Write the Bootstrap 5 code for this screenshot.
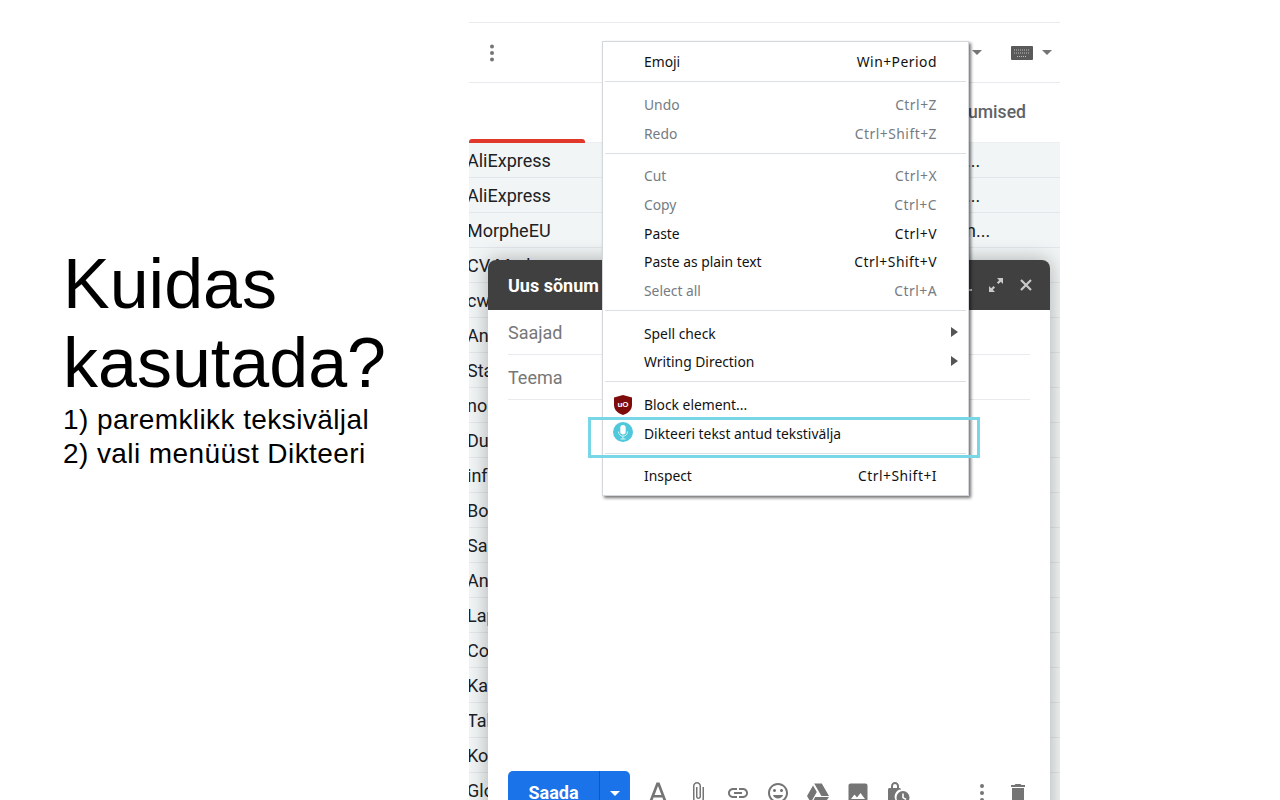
<!DOCTYPE html>
<html lang="et">
<head>
<meta charset="utf-8">
<title>Kuidas kasutada?</title>
<link href="https://cdn.jsdelivr.net/npm/bootstrap@5.3.0/dist/css/bootstrap.min.css" rel="stylesheet">
<style>
html,body{height:800px;overflow:hidden;background:#fff}
.stage{width:1060px;height:800px;overflow:hidden}
.intro{width:469px;padding:245px 0 0 63px;font-family:"Liberation Sans",Arial,sans-serif;color:#000}
.intro h1{font-size:70px;line-height:79px;font-weight:400;margin:0;font-family:inherit}
.intro p{font-size:28px;letter-spacing:.42px;line-height:34px;margin:0}
.mail{width:591px;height:800px;position:relative;overflow:hidden;font-family:Roboto,sans-serif}
.topbar{margin-top:22px;height:61px;border-top:1px solid #e8eaed;border-bottom:1px solid #e8eaed;padding:0 8px 0 20px}
.caret-d{width:0;height:0;border:5px solid transparent;border-top-color:#757575;border-bottom:0}
.tabbar{height:60px;position:relative;color:#5f6368;font-size:17.6px;font-weight:500;padding-left:499px;line-height:58px;border-bottom:1px solid #eceff1}
.redbar{position:absolute;left:0;bottom:-1px;width:116px;height:4px;background:#e0392b;border-radius:3px 3px 0 0}
.mrow{height:35px;background:#f2f5f5;border-bottom:1px solid #e3e6ea;font-size:18px;line-height:35px;color:#202124;white-space:nowrap}
.mrow .who{width:499px;flex:none;margin-left:-2px}
.compose{position:absolute;left:19px;top:260px;width:562px;height:580px;background:#fff;border-radius:8px 8px 0 0;box-shadow:0 0 20px rgba(0,0,0,.3)}
.chead{height:50px;background:#404040;border-radius:8px 8px 0 0;color:#fff;font-weight:700;font-size:18px;padding:0 18px 0 20px}
.cfield{margin:0 20px;height:45px;border-bottom:1px solid #e8eaed;color:#777;font-size:18px;line-height:45px}
.cfoot{padding:0 20px;height:69px;margin-top:auto}
.sendbtn{width:122px;height:44px;background:#1a73e8;color:#fff;font-weight:700;font-size:18px;border-radius:5px;flex:none;overflow:hidden}
.sendbtn .lbl{width:91px;text-align:center;line-height:44px}
.sendbtn .drop{flex:1;border-left:1px solid #1557b0;padding-top:20px}
.caret-w{width:0;height:0;border:5px solid transparent;border-top-color:#fff;border-bottom:0;margin:0 auto}
.cfoot svg{width:24px;height:24px;fill:#757575;flex:none}
.tools{gap:16px;margin-left:16px;padding-top:10px}
.tools2{gap:12px;margin-left:auto;padding-top:10px}
.ctxmenu{position:absolute;left:602px;top:41px;width:367px;height:455px;background:#fff;border:1px solid #d4d7db;box-shadow:2px 2px 3px rgba(0,0,0,.55);padding-top:6.3px;font-family:"Noto Sans",sans-serif;font-size:13.85px;color:#111;z-index:5}
.mi{height:28.67px;line-height:28.67px;padding-right:31px;white-space:nowrap}
.mi .slot{width:41px;flex:none;padding-right:2px}
.mi .sc{margin-left:auto;letter-spacing:.5px}
.mi.off{color:#757b82}
.mi .sub{margin-left:auto;margin-right:-21px;margin-top:-3px;width:0;height:0;border:5px solid transparent;border-left:7px solid #555;border-right:0}
.msep{height:1px;background:#dcdfe3;margin:4.5px 2px 8.5px 2px}
.hilite{position:absolute;left:588px;top:417px;width:392px;height:41px;border:3px solid #79d6e6;z-index:6}
.micshift{margin-top:-3px}
</style>
</head>
<body>
<div class="stage d-flex">
  <div class="intro">
    <h1>Kuidas kasutada?</h1>
    <p>1) paremklikk teksiväljal</p>
    <p>2) vali menüüst Dikteeri</p>
  </div>
  <div class="mail">
    <div class="topbar d-flex align-items-center">
      <svg width="6" height="18" viewBox="0 0 6 18" fill="#757575"><circle cx="3" cy="2.5" r="2"/><circle cx="3" cy="9" r="2"/><circle cx="3" cy="15.5" r="2"/></svg>
      <div class="ms-auto d-flex align-items-center">
        <div class="caret-d" style="margin-right:29px"></div>
        <svg width="22" height="14" viewBox="0 0 22 14"><rect width="22" height="14" rx="1" fill="#5a5a5a"/><path d="M3 4h16M3 7h16M6 10.5h10" stroke="#bbb" stroke-width="1" stroke-dasharray="1 1"/></svg>
        <div class="caret-d" style="margin-left:9px"></div>
      </div>
    </div>
    <div class="tabbar">umised<div class="redbar"></div></div>
    <div class="mrow d-flex"><span class="who">AliExpress</span><span>...</span></div>
    <div class="mrow d-flex"><span class="who">AliExpress</span><span>...</span></div>
    <div class="mrow d-flex"><span class="who">MorpheEU</span><span>n...</span></div>
    <div class="mrow d-flex"><span class="who">CV Mark</span></div>
    <div class="mrow d-flex"><span class="who">cw</span></div>
    <div class="mrow d-flex"><span class="who">An</span></div>
    <div class="mrow d-flex"><span class="who">Sta</span></div>
    <div class="mrow d-flex"><span class="who">no</span></div>
    <div class="mrow d-flex"><span class="who">Du</span></div>
    <div class="mrow d-flex"><span class="who">inf</span></div>
    <div class="mrow d-flex"><span class="who">Bo</span></div>
    <div class="mrow d-flex"><span class="who">Sa</span></div>
    <div class="mrow d-flex"><span class="who">An</span></div>
    <div class="mrow d-flex"><span class="who">Lap</span></div>
    <div class="mrow d-flex"><span class="who">Co</span></div>
    <div class="mrow d-flex"><span class="who">Ka</span></div>
    <div class="mrow d-flex"><span class="who">Tal</span></div>
    <div class="mrow d-flex"><span class="who">Ko</span></div>
    <div class="mrow d-flex"><span class="who">Glo</span></div>

    <div class="compose d-flex flex-column">
      <div class="chead d-flex align-items-center">
        <span>Uus sõnum</span>
        <div class="ms-auto d-flex align-items-center gap-3">
          <svg width="12" height="16" viewBox="0 0 12 16" fill="#c9c9c9"><rect y="12" width="12" height="2"/></svg>
          <svg width="16" height="16" viewBox="0 0 16 16" fill="#c9c9c9"><path d="M9 1h6v6l-2.2-2.2-2.3 2.3-1.600-1.600 2.300-2.300zM7 15H1V9l2.200 2.200 2.300-2.300 1.600 1.600-2.300 2.300z"/></svg>
          <svg width="12" height="12" viewBox="0 0 12 12" stroke="#c9c9c9" stroke-width="2.2"><path d="M1 1l10 10M11 1L1 11"/></svg>
        </div>
      </div>
      <div class="cfield">Saajad</div>
      <div class="cfield">Teema</div>
      <div class="cfoot d-flex">
        <div class="sendbtn d-flex"><span class="lbl">Saada</span><span class="drop"><span class="caret-w d-block"></span></span></div>
        <div class="tools d-flex">
          <svg viewBox="0 0 24 24"><path d="M10.500 1.500h3L21 21h-3l-1.600-4.500H7.600L6 21H3zM8.600 14h6.800L12 5z" fill-rule="evenodd"/></svg>
          <svg viewBox="0 0 24 24"><path d="M16.500 6v11.500c0 2.210-1.790 4-4 4s-4-1.790-4-4V5c0-1.380 1.120-2.500 2.500-2.500s2.500 1.120 2.500 2.500v10.500c0 .55-.45 1-1 1s-1-.45-1-1V6H10v9.500c0 1.380 1.120 2.500 2.500 2.500s2.500-1.120 2.500-2.500V5c0-2.210-1.790-4-4-4S7 2.790 7 5v12.500c0 3.040 2.460 5.500 5.500 5.500s5.500-2.460 5.500-5.500V6h-1.500z"/></svg>
          <svg viewBox="0 0 24 24"><path d="M3.900 12c0-1.710 1.390-3.100 3.100-3.100h4V7H7c-2.760 0-5 2.240-5 5s2.240 5 5 5h4v-1.900H7c-1.710 0-3.100-1.390-3.100-3.100zM8 13h8v-2H8v2zm9-6h-4v1.900h4c1.710 0 3.100 1.390 3.100 3.100s-1.390 3.100-3.100 3.100h-4V17h4c2.760 0 5-2.240 5-5s-2.240-5-5-5z"/></svg>
          <svg viewBox="0 0 24 24"><path d="M11.990 2C6.470 2 2 6.480 2 12s4.470 10 9.990 10C17.520 22 22 17.520 22 12S17.520 2 11.990 2zM12 20c-4.420 0-8-3.580-8-8s3.580-8 8-8 8 3.580 8 8-3.580 8-8 8zm3.500-9c.83 0 1.500-.67 1.500-1.500S16.330 8 15.500 8 14 8.670 14 9.500s.67 1.500 1.500 1.500zm-7 0c.83 0 1.500-.67 1.500-1.500S9.330 8 8.500 8 7 8.670 7 9.500 7.670 11 8.500 11zm3.500 6.500c2.330 0 4.310-1.460 5.110-3.500H6.890c.8 2.040 2.780 3.500 5.110 3.500z"/></svg>
          <svg viewBox="0 0 24 24"><path d="M8.200 2.500h7.600L23 15h-7.600zM7 4.500 10.800 11 4.800 21.500 1 15zM9.200 16H23l-3.800 5.500H6.200z"/></svg>
          <svg viewBox="0 0 24 24"><path d="M21.500 19.500v-15c0-1.100-.9-2-2-2h-15c-1.100 0-2 .9-2 2v15c0 1.100.9 2 2 2h15c1.100 0 2-.9 2-2zM8.500 13.500l2.500 3 3.500-4.500 4.500 6H5z"/></svg>
          <svg viewBox="0 0 24 24"><path d="M9 1C6.800 1 5 2.800 5 5v2H3.500C2.700 7 2 7.700 2 8.500V19c0 .8.7 1.500 1.500 1.500h7A7.500 7.500 0 0 1 15 8.200V8.500c0-.8-.7-1.500-1.500-1.500H13V5c0-2.200-1.800-4-4-4zm0 2c1.100 0 2 .9 2 2v2H7V5c0-1.100.9-2 2-2z"/><path fill-rule="evenodd" d="M17 10a6.500 6.500 0 1 0 0 13 6.500 6.500 0 0 0 0-13zm-.8 2.500h1.600v3.700l2.700 1.600-.8 1.300-3.500-2.100z"/></svg>
        </div>
        <div class="tools2 d-flex">
          <svg viewBox="0 0 24 24"><circle cx="12" cy="5" r="2"/><circle cx="12" cy="12" r="2"/><circle cx="12" cy="19" r="2"/></svg>
          <svg viewBox="0 0 24 24"><path d="M6 19c0 1.100.9 2 2 2h8c1.100 0 2-.9 2-2V7H6v12zM19 4h-3.500l-1-1h-5l-1 1H5v2h14V4z"/></svg>
        </div>
      </div>
    </div>
  </div>
</div>

<div class="ctxmenu">
  <div class="mi d-flex"><span class="slot"></span><span>Emoji</span><span class="sc">Win+Period</span></div>
  <div class="msep"></div>
  <div class="mi off d-flex"><span class="slot"></span><span>Undo</span><span class="sc">Ctrl+Z</span></div>
  <div class="mi off d-flex"><span class="slot"></span><span>Redo</span><span class="sc">Ctrl+Shift+Z</span></div>
  <div class="msep"></div>
  <div class="mi off d-flex"><span class="slot"></span><span>Cut</span><span class="sc">Ctrl+X</span></div>
  <div class="mi off d-flex"><span class="slot"></span><span>Copy</span><span class="sc">Ctrl+C</span></div>
  <div class="mi d-flex"><span class="slot"></span><span>Paste</span><span class="sc">Ctrl+V</span></div>
  <div class="mi d-flex"><span class="slot"></span><span>Paste as plain text</span><span class="sc">Ctrl+Shift+V</span></div>
  <div class="mi off d-flex"><span class="slot"></span><span>Select all</span><span class="sc">Ctrl+A</span></div>
  <div class="msep"></div>
  <div class="mi d-flex align-items-center"><span class="slot"></span><span>Spell check</span><span class="sub"></span></div>
  <div class="mi d-flex align-items-center"><span class="slot"></span><span>Writing Direction</span><span class="sub"></span></div>
  <div class="msep"></div>
  <div class="mi d-flex align-items-center"><span class="slot d-flex justify-content-center"><svg width="20" height="22" viewBox="0 0 20 22"><path d="M10 1 19 3.500V11c0 5-4 8.500-9 10C5 19.500 1 16 1 11V3.500z" fill="#7f0c0c"/><text x="10" y="13" text-anchor="middle" font-family="Liberation Sans, sans-serif" font-weight="700" font-size="8" fill="#fff">uO</text></svg></span><span>Block element...</span></div>
  <div class="mi d-flex align-items-center"><span class="slot d-flex justify-content-center micshift"><svg width="20" height="20" viewBox="0 0 20 20"><circle cx="10" cy="10" r="10" fill="#4fc8dc"/><rect x="7.300" y="3" width="5.400" height="9.500" rx="2.700" fill="#fff"/><path d="M5.500 9.500c0 3 2 4.700 4.500 4.700s4.500-1.700 4.500-4.700M10 14v3M7.500 17h5" fill="none" stroke="#d6f3f8" stroke-width="1"/></svg></span><span>Dikteeri tekst antud tekstivälja</span></div>
  <div class="msep"></div>
  <div class="mi d-flex"><span class="slot"></span><span>Inspect</span><span class="sc">Ctrl+Shift+I</span></div>
</div>
<div class="hilite"></div>
</body>
</html>
